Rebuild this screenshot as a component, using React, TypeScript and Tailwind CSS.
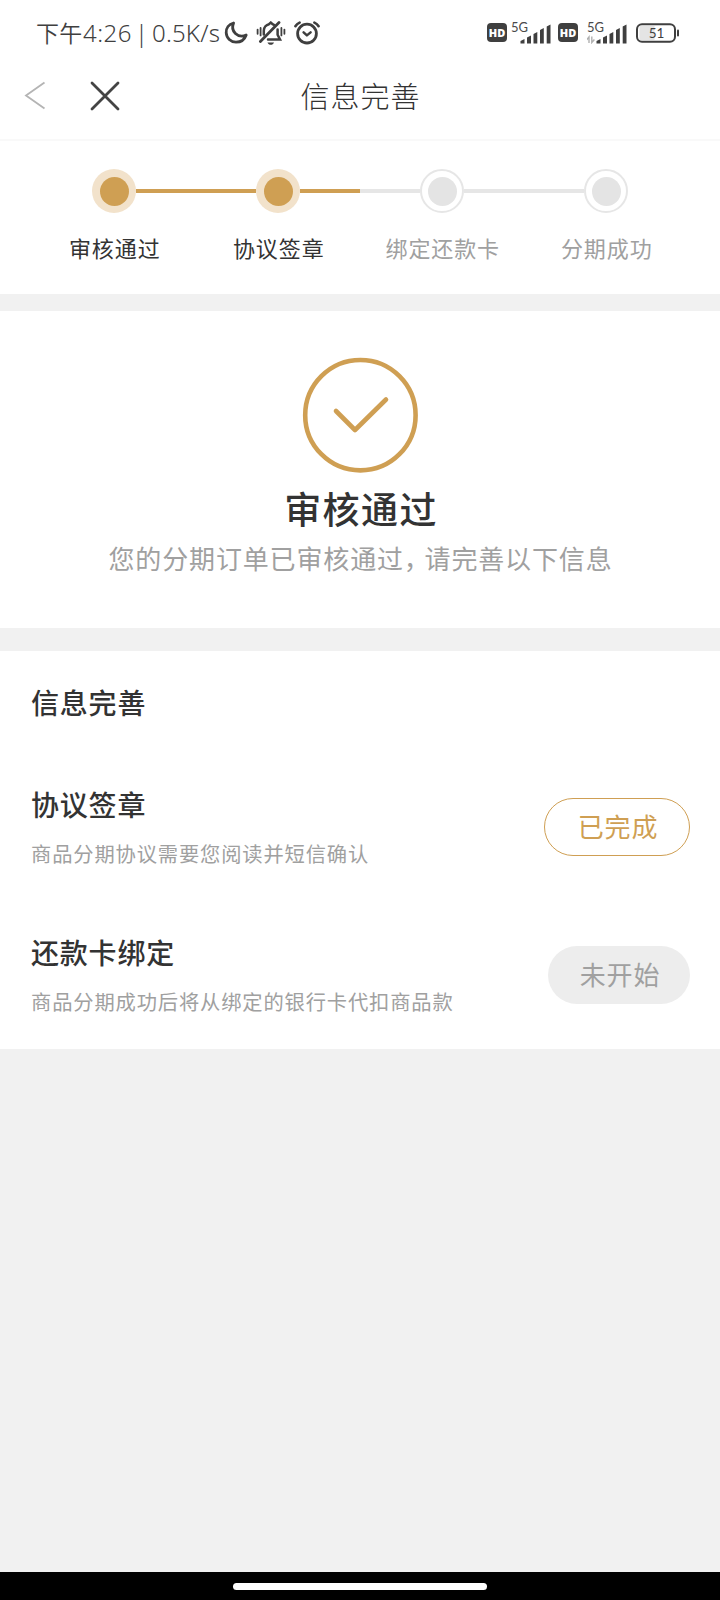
import clsx from "clsx";

interface Step {
    done: boolean;
    label: string;
}

interface Task {
    description: string;
    done: boolean;
    status: string;
    title: string;
}

const STEPS: Step[] = [
    { done: true, label: "审核通过" },
    { done: true, label: "协议签章" },
    { done: false, label: "绑定还款卡" },
    { done: false, label: "分期成功" },
];

const TASKS: Task[] = [
    { description: "商品分期协议需要您阅读并短信确认", done: true, status: "已完成", title: "协议签章" },
    { description: "商品分期成功后将从绑定的银行卡代扣商品款", done: false, status: "未开始", title: "还款卡绑定" },
];

const MoonIcon = () => (
    <svg className="h-6 w-6" fill="none" stroke="#3f3f3f" strokeLinejoin="round" strokeWidth="2.8" viewBox="0 0 24 24">
        <path d="M9.6 2C4.8 3.2 2 7.2 2.2 11.8C2.5 17.2 6.8 21.2 12 21.2C16.6 21.2 20.6 18.6 22.2 14C18.6 15.6 14.4 15.2 11.4 12.4C8.6 9.8 8 5.8 9.6 2Z" />
    </svg>
);

const MutedBellIcon = () => (
    <svg className="h-6 w-[30px]" fill="none" stroke="#3f3f3f" strokeLinecap="round" viewBox="0 0 30 24">
        <path d="M4.4 20.4L23 1.6" strokeWidth="2.8" />
        <path d="M7.8 13.6V9.8C7.8 6.2 10.4 3.8 13 3.2L14.8 1.6L16.6 3.2L18 3.8" strokeWidth="2.5" />
        <path d="M21.6 8.4V13.8L24 18.4H12" strokeWidth="2.5" />
        <path d="M11.5 21.4H18C17.4 23 16.2 23.8 14.8 23.8C13.3 23.8 12.1 23 11.5 21.4Z" fill="#3f3f3f" stroke="none" />
        <path d="M1.6 8.6V12.8M4.6 7V14.4M25.4 7V14.4M28.4 8.6V12.8" strokeWidth="1.8" />
    </svg>
);

const AlarmIcon = () => (
    <svg className="h-6 w-[26px]" fill="none" stroke="#3f3f3f" strokeLinecap="round" strokeLinejoin="round" viewBox="0 0 26 24">
        <circle cx="13" cy="12.6" r="9.4" strokeWidth="2.8" />
        <path d="M9.6 11.4L12.9 14.4L16.6 11.4" strokeWidth="2.5" />
        <path d="M1.4 5.2C2.4 3.6 3.8 2.4 5.6 1.6M24.6 5.2C23.6 3.6 22.2 2.4 20.4 1.6" strokeWidth="2.6" />
    </svg>
);

const HdBadge = () => (
    <div className="flex h-[19px] w-5 items-center justify-center rounded-[4px] bg-[#3f3f3f] font-['Open_Sans',sans-serif] text-[11px] leading-none font-extrabold text-white">
        HD
    </div>
);

const Signal = ({ traffic = false }: { traffic?: boolean }) => (
    <div className="flex w-10 flex-col">
        <span className="h-[10px] font-['Lato',sans-serif] text-[13px] leading-[10px] text-[#4a4a4a]">5G</span>
        <svg className="-mt-[9px] h-[21px] w-10" viewBox="0 0 40 21">
            {traffic && <path d="M-0.6 17L2 14V20M4.8 13.5V19.5L7.4 16.5" fill="none" stroke="#b0b0b0" strokeWidth="1.4" />}
            <path
                d="M9.5 20.5V18L13.5 16V20.5ZM16 20.5V14.5L20 12.5V20.5ZM22.5 20.5V11L26.3 9V20.5ZM29 20.5V7L32.8 5V20.5ZM35.7 20.5V3.5L39.5 1.5V20.5Z"
                fill="#3f3f3f"
            />
        </svg>
    </div>
);

const Battery = () => (
    <svg className="h-5 w-11" viewBox="0 0 44 20">
        <rect fill="#e4e4e4" height="14" width="15" x="3.5" y="3" />
        <rect fill="none" height="17.4" rx="5" stroke="#3f3f3f" strokeWidth="2" width="38" x="1" y="1.3" />
        <path d="M42 7.5V12.5" stroke="#3f3f3f" strokeLinecap="round" strokeWidth="2" />
        <text className="font-['Lato',sans-serif]" fill="#3f3f3f" fontSize="13.5" textAnchor="middle" x="20.5" y="14.8">
            51
        </text>
    </svg>
);

const StatusBar = () => (
    <div className="flex h-16 items-center pt-px pr-10 pl-9">
        <div className="flex w-[188px] items-baseline font-['Noto_Sans','Noto_Sans_CJK_SC',sans-serif] text-[24px] leading-8 font-[350] text-[#3f3f3f]">
            <span className="w-[47px] text-[23px] tracking-[0.3px]">下午</span>
            <span className="w-[52px] tracking-[0.5px]">4:26</span>
            <span className="w-[17px]">|</span>
            <span className="tracking-[0.2px]">0.5K/s</span>
        </div>
        <MoonIcon />
        <div className="ml-2">
            <MutedBellIcon />
        </div>
        <div className="ml-2">
            <AlarmIcon />
        </div>
        <div className="ml-auto flex items-center">
            <HdBadge />
            <div className="mr-[7px] ml-1">
                <Signal />
            </div>
            <HdBadge />
            <div className="mr-[9px] ml-[9px]">
                <Signal traffic />
            </div>
            <Battery />
        </div>
    </div>
);

const NavBar = () => (
    <header className="grid h-[77px] grid-cols-[1fr_auto_1fr] items-start border-b-2 border-[#f9f9f9] pt-[11px]">
        <div className="flex items-center pt-[4px]">
            <svg className="ml-6 h-8 w-6" fill="none" stroke="#b4b4b4" strokeWidth="1.8" viewBox="0 0 24 32">
                <path d="M20.5 3.5L2 16.5L20.5 29.5" />
            </svg>
            <svg className="ml-10 h-8 w-8" fill="none" stroke="#444444" strokeLinecap="round" strokeWidth="2.8" viewBox="0 0 32 32">
                <path d="M4 4L30 30M30 4L4 30" />
            </svg>
        </div>
        <h1 className="pl-px text-[29px] leading-10 font-light tracking-[1px] text-[#333333]">信息完善</h1>
    </header>
);

const Stepper = () => (
    <section className="flex h-[153px] bg-white px-8 pt-7">
        {STEPS.map((step, index) => {
            const next = STEPS[index + 1];

            return (
                <div className="flex w-41 flex-col items-center" key={step.label}>
                    <div className="flex w-full items-center">
                        <div className={clsx("h-1 flex-1", index > 0 && (STEPS[index - 1].done && step.done ? "bg-[#cf9f53]" : "bg-[#e6e6e6]"))} />
                        <div
                            className={clsx(
                                "flex size-11 items-center justify-center rounded-full",
                                step.done ? "bg-[#f2e2cb]" : "border-2 border-[#e6e6e6]",
                            )}
                        >
                            <div className={clsx("size-[29px] rounded-full", step.done ? "bg-[#cf9f53]" : "bg-[#e4e4e4]")} />
                        </div>
                        <div className={clsx("h-1 flex-1", next && (step.done ? "bg-[#cf9f53]" : "bg-[#e6e6e6]"))} />
                    </div>
                    <div className={clsx("mt-[18px] pl-[1.5px] text-[22px] leading-8 tracking-[0.9px]", step.done ? "text-[#333333]" : "text-[#a0a0a0]")}>
                        {step.label}
                    </div>
                </div>
            );
        })}
    </section>
);

const ResultPanel = () => (
    <section className="mt-[17px] flex h-[317px] flex-col items-center bg-white pt-[46px]">
        <svg className="size-[116px]" fill="none" stroke="#cf9f53" viewBox="0 0 116 116">
            <circle cx="58.4" cy="58.2" r="55.2" strokeWidth="4.6" />
            <path d="M34 54L53 73L84 42.5" strokeLinecap="round" strokeLinejoin="round" strokeWidth="4.6" />
        </svg>
        <h2 className="mt-[7px] pl-[2px] text-[37px] leading-[56px] font-medium tracking-[1.4px] text-[#333333]">审核通过</h2>
        <p className="mt-[2px] pl-px text-[26px] leading-10 tracking-[0.85px] text-[#a0a0a0]">
            您的分期订单已审核通过
            <span className="tracking-[-5.3px]">，</span>
            请完善以下信息
        </p>
    </section>
);

const TaskRow = ({ task }: { task: Task }) => (
    <li className="flex h-[148px] items-center justify-between pr-[30px] pl-[31px]">
        <div>
            <h3 className="text-[28px] leading-10 font-medium tracking-[0.8px] text-[#333333]">{task.title}</h3>
            <p className="mt-[13px] text-[20.3px] leading-8 tracking-[0.85px] text-[#a0a0a0]">{task.description}</p>
        </div>
        <div
            className={clsx(
                "mt-px flex h-[58px] items-center justify-center rounded-full pb-[2px] pl-[2px] text-[26px] tracking-[0.8px]",
                task.done ? "w-[146px] border-[1.5px] border-[#cf9f53] text-[#cf9f53]" : "w-[142px] bg-[#ededed] text-[#a0a0a0]",
            )}
        >
            {task.status}
        </div>
    </li>
);

export default function App() {
    return (
        <div className="flex h-[1600px] w-[720px] flex-col bg-[#f1f1f1] font-['Noto_Sans_CJK_SC',sans-serif]">
            <div className="bg-white">
                <StatusBar />
                <NavBar />
            </div>
            <Stepper />
            <ResultPanel />
            <section className="mt-[23px] h-[398px] bg-white pt-[31px]">
                <h2 className="pl-[31px] text-[28px] leading-10 font-medium tracking-[0.8px] text-[#333333]">信息完善</h2>
                <ul className="mt-[30px]">
                    {TASKS.map((task) => (
                        <TaskRow key={task.title} task={task} />
                    ))}
                </ul>
            </section>
            <footer className="mt-auto flex h-7 justify-center bg-black pt-[11px]">
                <div className="h-[7px] w-[254px] rounded-full bg-white" />
            </footer>
        </div>
    );
}
